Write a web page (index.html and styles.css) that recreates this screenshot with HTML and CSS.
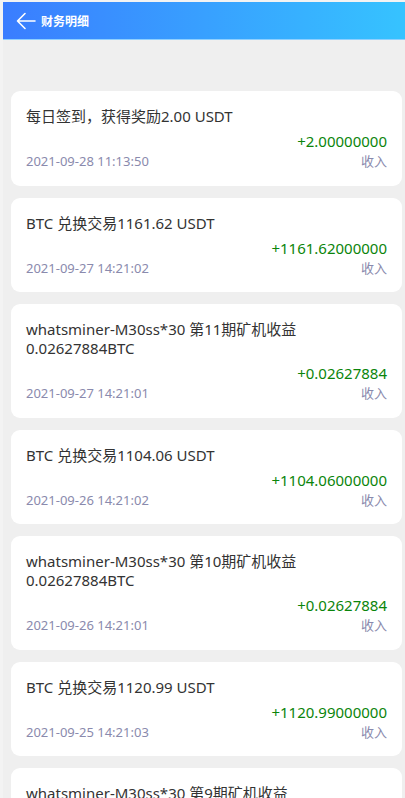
FILE: index.html
```html
<!DOCTYPE html>
<html lang="zh-CN">
<head>
  <meta charset="UTF-8">
  <title>财务明细</title>
  <link rel="stylesheet" href="styles.css">
</head>
<body>
  <div class="page">
    <header class="topbar">
      <svg class="back" width="20" height="18" viewBox="0 0 20 18">
        <path d="M9 1.5 L1.5 9 L9 16.5 M1.5 9 H19" fill="none" stroke="#fff" stroke-width="1.6" stroke-linecap="round" stroke-linejoin="round"/>
      </svg>
      <span class="title">财务明细</span>
    </header>

    <div class="list">
      <div class="item">
        <div class="desc">每日签到，获得奖励2.00 USDT</div>
        <div class="amount">+2.00000000</div>
        <div class="meta"><span>2021-09-28 11:13:50</span><span>收入</span></div>
      </div>
      <div class="item">
        <div class="desc">BTC 兑换交易1161.62 USDT</div>
        <div class="amount">+1161.62000000</div>
        <div class="meta"><span>2021-09-27 14:21:02</span><span>收入</span></div>
      </div>
      <div class="item">
        <div class="desc">whatsminer-M30ss*30 第11期矿机收益0.02627884BTC</div>
        <div class="amount">+0.02627884</div>
        <div class="meta"><span>2021-09-27 14:21:01</span><span>收入</span></div>
      </div>
      <div class="item">
        <div class="desc">BTC 兑换交易1104.06 USDT</div>
        <div class="amount">+1104.06000000</div>
        <div class="meta"><span>2021-09-26 14:21:02</span><span>收入</span></div>
      </div>
      <div class="item">
        <div class="desc">whatsminer-M30ss*30 第10期矿机收益0.02627884BTC</div>
        <div class="amount">+0.02627884</div>
        <div class="meta"><span>2021-09-26 14:21:01</span><span>收入</span></div>
      </div>
      <div class="item">
        <div class="desc">BTC 兑换交易1120.99 USDT</div>
        <div class="amount">+1120.99000000</div>
        <div class="meta"><span>2021-09-25 14:21:03</span><span>收入</span></div>
      </div>
      <div class="item">
        <div class="desc">whatsminer-M30ss*30 第9期矿机收益0.02627884BTC</div>
        <div class="amount">+0.02627884</div>
        <div class="meta"><span>2021-09-25 14:21:01</span><span>收入</span></div>
      </div>
    </div>
  </div>
</body>
</html>
```

FILE: styles.css
```css
html, body {
  margin: 0;
  height: 100%;
  overflow: hidden;
}
body {
  background-color: #f3f3f3;
  font-family: "Noto Sans", "Noto Sans CJK SC", sans-serif;
  padding: 2px 0 0 3px;
  box-sizing: border-box;
}
.page {
  background-color: #efefef;
  height: 100%;
}
.topbar {
  height: 37px;
  display: flex;
  align-items: center;
  padding-left: 13px;
  background: linear-gradient(90deg, #3a7dff, #36c3ff);
  border-bottom: 1px solid #8fd0ff;
}
.back {
  display: block;
  margin-right: 5px;
}
.title {
  color: #fff;
  font-size: 12px;
  font-weight: bold;
  font-family: "Noto Sans CJK SC", sans-serif;
}
.list {
  padding: 51px 3px 0 8px;
  display: flex;
  flex-direction: column;
  gap: 12px;
}
.item {
  background-color: #fff;
  border-radius: 9px;
  padding: 16px 15px 14.5px 15px;
}
.desc {
  font-size: 15px;
  line-height: 19px;
  color: #333;
  padding-right: 90px;
}
.amount {
  margin-top: 5px;
  text-align: right;
  font-size: 15px;
  line-height: 20px;
  color: #0b850b;
}
.meta {
  display: flex;
  justify-content: space-between;
  font-size: 13px;
  line-height: 20px;
  color: #8a8aad;
}
```
